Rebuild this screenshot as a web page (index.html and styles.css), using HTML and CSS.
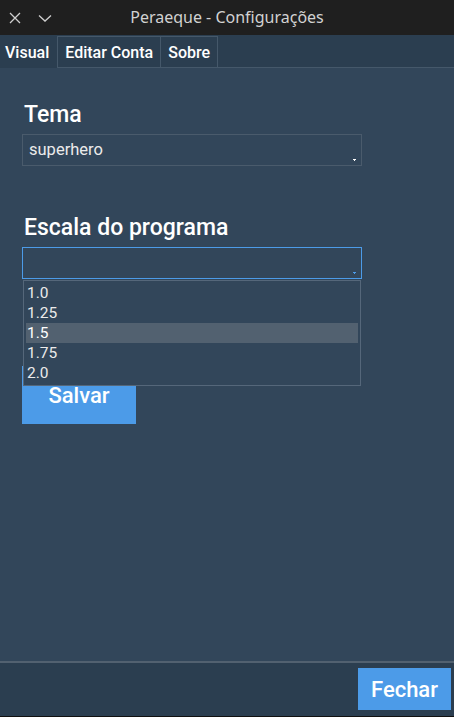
FILE: index.html
```html
<!DOCTYPE html>
<html lang="pt">
<head>
<meta charset="utf-8">
<title>Peraeque - Configurações</title>
<link rel="stylesheet" href="styles.css">
</head>
<body>
<div class="window">
  <div class="titlebar">
    <div class="tb-icons">
      <svg class="tb-icon" width="14" height="14" viewBox="0 0 14 14"><path d="M2 2 L12 12 M12 2 L2 12" stroke="#cfcfcf" stroke-width="1.3" fill="none"/></svg>
      <svg class="tb-icon" width="16" height="14" viewBox="0 0 16 14"><path d="M2 4.5 L8 10 L14 4.5" stroke="#cfcfcf" stroke-width="1.3" fill="none"/></svg>
    </div>
    <div class="tb-title">Peraeque - Configurações</div>
  </div>
  <div class="tabs">
    <div class="tab selected">Visual</div>
    <div class="tab">Editar Conta</div>
    <div class="tab">Sobre</div>
    <div class="tab-rest"></div>
  </div>
  <div class="content">
    <div class="label">Tema</div>
    <div class="combo">
      <span class="combo-text">superhero</span>
      <span class="arrow"></span>
    </div>
    <div class="label second">Escala do programa</div>
    <div class="combo-wrap">
      <div class="combo focused">
        <span class="combo-text"></span>
        <span class="arrow blue"></span>
      </div>
      <div class="listbox">
        <div class="item">1.0</div>
        <div class="item">1.25</div>
        <div class="item active">1.5</div>
        <div class="item">1.75</div>
        <div class="item">2.0</div>
      </div>
    </div>
    <div class="btn-salvar">Salvar</div>
  </div>
  <div class="footer">
    <div class="btn-fechar">Fechar</div>
  </div>
</div>
</body>
</html>
```

FILE: styles.css
```css
html, body {
  margin: 0;
  padding: 0;
}
body {
  font-family: Roboto, "Liberation Sans", sans-serif;
  background: #32465a;
}
.window {
  height: 100vh;
  display: flex;
  flex-direction: column;
  overflow: hidden;
}
.titlebar {
  height: 35px;
  flex: none;
  background: #1f1f1f;
  display: flex;
  align-items: center;
  position: relative;
}
.tb-icons {
  display: flex;
  align-items: center;
  gap: 15px;
  padding-left: 8px;
}
.tb-icon {
  display: block;
}
.tb-title {
  position: absolute;
  left: 0;
  right: 0;
  top: 0;
  height: 35px;
  line-height: 35px;
  text-align: center;
  font-family: "Noto Sans", sans-serif;
  font-size: 16px;
  color: #d2d2d2;
  pointer-events: none;
}
.tabs {
  height: 33px;
  flex: none;
  background: #2b3e50;
  display: flex;
  align-items: stretch;
}
.tab {
  padding: 0 7px;
  padding-top: 1px;
  font-size: 16px;
  font-weight: 500;
  color: #ffffff;
  display: flex;
  align-items: center;
  border: 1px solid #45586a;
  border-left: none;
  margin-top: 1px;
  box-sizing: border-box;
}
.tab.selected {
  border: none;
  padding-left: 5px;
  padding-right: 8px;
  margin-top: 0;
}
.tab:nth-child(2) {
  border-left: 1px solid #45586a;
}
.tab-rest {
  flex: 1;
  border-bottom: 1px solid #45586a;
}
.content {
  flex: 1;
  padding: 35px 0 0 22px;
}
.label {
  font-size: 23px;
  font-weight: 500;
  color: #ffffff;
  line-height: 24px;
  padding-left: 2px;
  margin-bottom: 7px;
}
.label.second {
  margin-top: 50px;
}
.combo {
  width: 340px;
  height: 32px;
  box-sizing: border-box;
  border: 1px solid #4a5b6c;
  position: relative;
  display: flex;
  align-items: center;
  padding-left: 6px;
  padding-bottom: 1px;
}
.combo.focused {
  border-color: #4c9be8;
}
.combo-text {
  font-size: 16.5px;
  color: #ebebeb;
}
.arrow {
  position: absolute;
  right: 5px;
  bottom: 5px;
  width: 3px;
  height: 1px;
  background: #ffffff;
}
.arrow::after {
  content: "";
  position: absolute;
  left: 1px;
  top: 1px;
  width: 1px;
  height: 1px;
  background: #ffffff;
}
.arrow.blue,
.arrow.blue::after {
  background: #4c9be8;
}
.combo-wrap {
  position: relative;
}
.listbox {
  position: absolute;
  top: 33px;
  left: 1px;
  width: 338px;
  height: 106px;
  box-sizing: border-box;
  border: 1px solid #55677a;
  background: #32465a;
  padding: 2px 2px 0 2px;
  z-index: 2;
}
.item {
  height: 20px;
  line-height: 21px;
  font-size: 15.5px;
  color: #ebebeb;
  padding-left: 1px;
}
.item.active {
  background: #526170;
  color: #ffffff;
}
.btn-salvar {
  margin-top: 87px;
  width: 114px;
  height: 58px;
  background: #4c9be8;
  color: #ffffff;
  font-size: 22px;
  font-weight: 500;
  display: flex;
  align-items: center;
  justify-content: center;
}
.footer {
  flex: none;
  height: 48px;
  border-top: 2px solid #526170;
  background: #2b3e50;
  display: flex;
  justify-content: flex-end;
  padding: 5px 3px 0 0;
  border-bottom: 1px solid #111;
}
.btn-fechar {
  width: 93px;
  height: 42px;
  background: #4c9be8;
  color: #ffffff;
  font-size: 22px;
  font-weight: 500;
  display: flex;
  align-items: center;
  justify-content: center;
}
```
